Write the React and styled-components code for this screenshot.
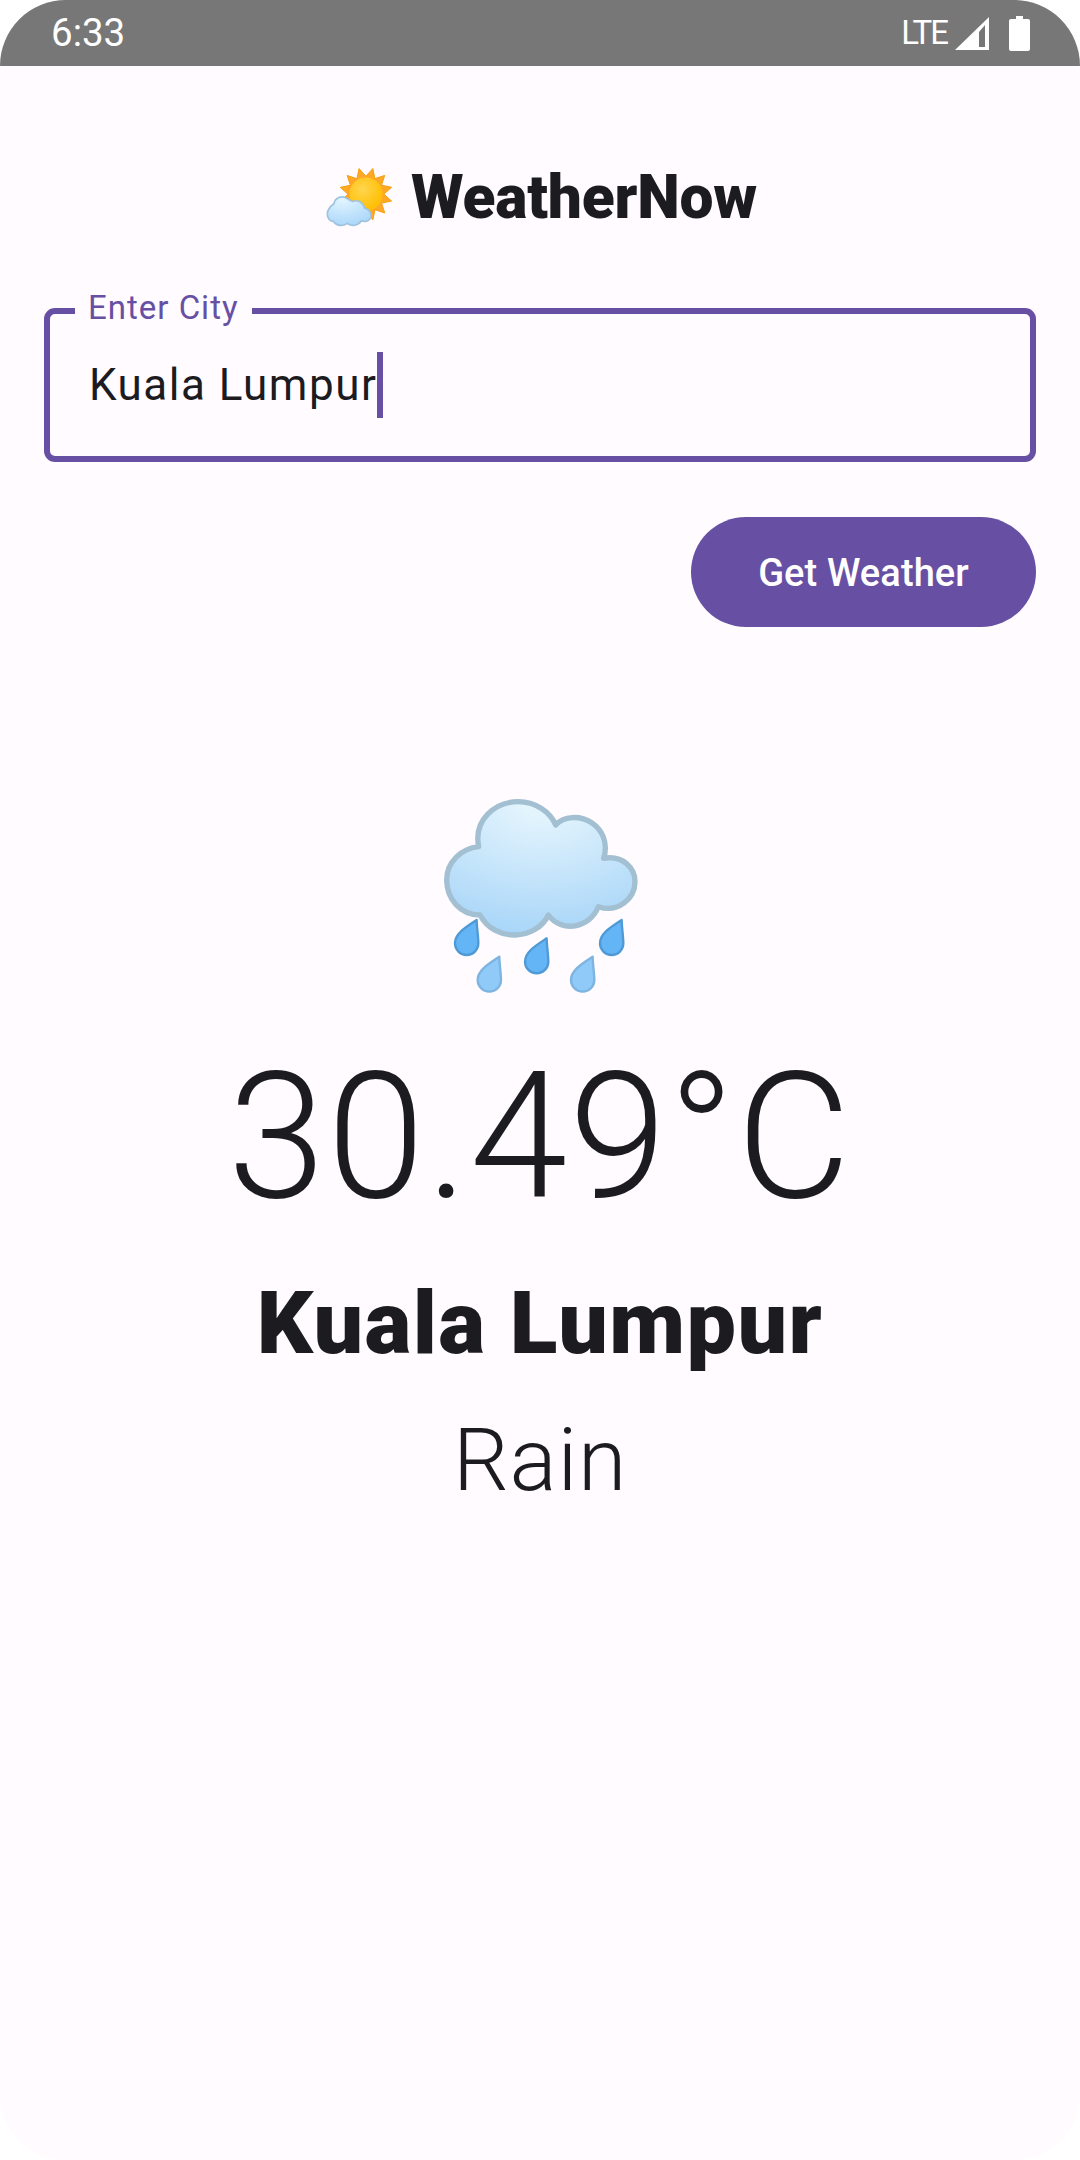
import React from "react";
import styled, { createGlobalStyle } from "styled-components";

const GlobalStyle = createGlobalStyle`
  html, body {
    margin: 0;
    padding: 0;
    background: #fff;
  }
`;

const Screen = styled.div`
  width: 1080px;
  height: 2160px;
  border-radius: 66px;
  overflow: hidden;
  background: #fffbfe;
  color: #1c1b1f;
  font-family: Roboto, "Liberation Sans", sans-serif;
  display: flex;
  flex-direction: column;
`;

const StatusBar = styled.div`
  height: 66px;
  flex: none;
  background: #777777;
  color: #fff;
  display: flex;
  align-items: center;
  justify-content: space-between;
  padding: 0 50px 0 51px;
`;
const Clock = styled.div`
  font-size: 38.5px;
  line-height: 66px;
`;
const StatusIcons = styled.div`
  display: flex;
  align-items: center;
`;
const Network = styled.div`
  font-size: 33px;
  line-height: 66px;
  letter-spacing: -2px;
  margin-right: 8px;
`;
const Signal = styled.svg`
  display: block;
  margin-right: 20px;
`;
const Battery = styled.svg`
  display: block;
`;

const Content = styled.div`
  padding: 100px 44px 0;
  display: flex;
  flex-direction: column;
`;

const TitleRow = styled.div`
  display: flex;
  align-items: center;
  justify-content: center;
  gap: 17px;
  height: 64px;
  padding-left: 3px;
`;
const Title = styled.h1`
  margin: 0;
  font-size: 60.5px;
  line-height: 64px;
  font-weight: 900;
  letter-spacing: -0.2px;
`;

const Field = styled.div`
  position: relative;
  box-sizing: border-box;
  height: 154px;
  margin-top: 78px;
  padding: 0 39px;
  border: 6px solid #6750a4;
  border-radius: 11px;
  display: flex;
  align-items: center;
`;
const FieldLabel = styled.label`
  position: absolute;
  top: -26px;
  left: 25px;
  padding: 0 13px;
  background: #fffbfe;
  color: #6750a4;
  font-size: 33px;
  line-height: 40px;
  letter-spacing: 1px;
`;
const FieldValue = styled.div`
  font-size: 44px;
  line-height: 66px;
  letter-spacing: 1.5px;
`;
const Caret = styled.span`
  display: inline-block;
  width: 6px;
  height: 66px;
  background: #6750a4;
  vertical-align: top;
`;

const Actions = styled.div`
  display: flex;
  justify-content: flex-end;
  margin-top: 55px;
`;
const Button = styled.button`
  width: 345px;
  height: 110px;
  padding: 2px 0 0;
  border: 0;
  border-radius: 55px;
  background: #6750a4;
  color: #fff;
  font-family: inherit;
  font-size: 38px;
  font-weight: 500;
  letter-spacing: 0.1px;
`;

const Result = styled.div`
  display: flex;
  flex-direction: column;
  align-items: center;
  margin-top: 153px;
`;
const RainIcon = styled.svg`
  display: block;
`;
const Temperature = styled.div`
  margin-top: 42px;
  font-size: 176px;
  line-height: 190px;
  font-weight: 300;
  letter-spacing: 1.6px;
`;
const City = styled.div`
  margin-top: 39px;
  font-size: 88px;
  line-height: 104px;
  font-weight: 900;
  letter-spacing: 1.4px;
`;
const Condition = styled.div`
  margin-top: 33px;
  font-size: 88px;
  line-height: 104px;
  font-weight: 300;
  letter-spacing: 0.7px;
`;

const DROP = "M170 420C140 440 105 460 105 490A35 35 0 0 0 175 490C175 470 170 440 170 420Z";

function starPoints(cx, cy, outer, inner, count) {
  const pts = [];
  for (let i = 0; i < count * 2; i++) {
    const r = i % 2 ? inner : outer;
    const a = (Math.PI * i) / count - Math.PI / 2 + 0.26;
    pts.push(`${cx + r * Math.cos(a)},${cy + r * Math.sin(a)}`);
  }
  return pts.join(" ");
}

function SunCloudIcon() {
  return (
    <svg width="68" height="63" viewBox="48 48 204 190" style={{ display: "block" }}>
      <defs>
        <radialGradient id="sun" cx="0.4" cy="0.35" r="0.6">
          <stop offset="0" stopColor="#ffd54f" />
          <stop offset="1" stopColor="#ffc107" />
        </radialGradient>
        <radialGradient id="smallCloud" cx="0.35" cy="0.1" r="1">
          <stop offset="0" stopColor="#e1f5fe" />
          <stop offset="1" stopColor="#a6d4fa" />
        </radialGradient>
      </defs>
      <polygon points={starPoints(168, 130, 80, 54, 12)} fill="#ffa726" stroke="#f59e0b" strokeWidth="3" strokeLinejoin="round" />
      <circle cx="168" cy="130" r="50" fill="url(#sun)" />
      <path
        d="M72 158C74 142 92 134 106 140C116 146 122 150 128 152C142 146 160 154 164 172C178 174 186 188 182 202C176 212 164 214 154 210C144 226 124 228 112 218C98 228 78 226 70 212C54 212 48 192 54 178C58 168 66 162 72 158Z"
        fill="url(#smallCloud)"
        stroke="#9fc3dc"
        strokeWidth="5"
      />
    </svg>
  );
}

function RainCloudIcon() {
  return (
    <RainIcon width="240" height="220" viewBox="0 0 720 660">
      <defs>
        <radialGradient id="rainCloud" cx="0.5" cy="0" r="1.05">
          <stop offset="0.1" stopColor="#e3f4fd" />
          <stop offset="1" stopColor="#a5d4f8" />
        </radialGradient>
      </defs>
      <path
        d="M176 200C160 120 225 65 295 65C345 65 390 95 407 135C430 108 480 105 515 128C548 150 565 190 551 235C610 225 645 265 645 305C645 355 595 400 535 380C510 445 425 460 385 405C350 480 225 490 180 405C120 405 80 355 80 300C80 245 125 205 176 200Z"
        fill="url(#rainCloud)"
        stroke="#a3bfd2"
        strokeWidth="16"
        strokeLinejoin="round"
      />
      <g fill="#64b5f6" stroke="#4f9ad6" strokeWidth="7" strokeLinejoin="round">
        <path d={DROP} />
        <path d={DROP} transform="translate(210 55)" />
        <path d={DROP} transform="translate(435 0)" />
      </g>
      <g fill="#90caf9" stroke="#7db4e0" strokeWidth="7" strokeLinejoin="round">
        <path d={DROP} transform="translate(68 110)" />
        <path d={DROP} transform="translate(348 110)" />
      </g>
    </RainIcon>
  );
}

export default function App() {
  return (
    <Screen>
      <GlobalStyle />
      <StatusBar>
        <Clock>6:33</Clock>
        <StatusIcons>
          <Network>LTE</Network>
          <Signal width="34" height="33" viewBox="0 0 34 33">
            <path d="M0 33L34 0V33Z" fill="#fff" />
            <path d="M24 15L30 8V30H24Z" fill="#777" />
          </Signal>
          <Battery width="21" height="35" viewBox="0 0 21 35">
            <path d="M7 0H14V3H19A2 2 0 0 1 21 5V33A2 2 0 0 1 19 35H2A2 2 0 0 1 0 33V5A2 2 0 0 1 2 3H7Z" fill="#fff" />
          </Battery>
        </StatusIcons>
      </StatusBar>
      <Content>
        <TitleRow>
          <SunCloudIcon />
          <Title>WeatherNow</Title>
        </TitleRow>
        <Field>
          <FieldLabel>Enter City</FieldLabel>
          <FieldValue>
            Kuala Lumpur
            <Caret />
          </FieldValue>
        </Field>
        <Actions>
          <Button>Get Weather</Button>
        </Actions>
        <Result>
          <RainCloudIcon />
          <Temperature>30.49°C</Temperature>
          <City>Kuala Lumpur</City>
          <Condition>Rain</Condition>
        </Result>
      </Content>
    </Screen>
  );
}
